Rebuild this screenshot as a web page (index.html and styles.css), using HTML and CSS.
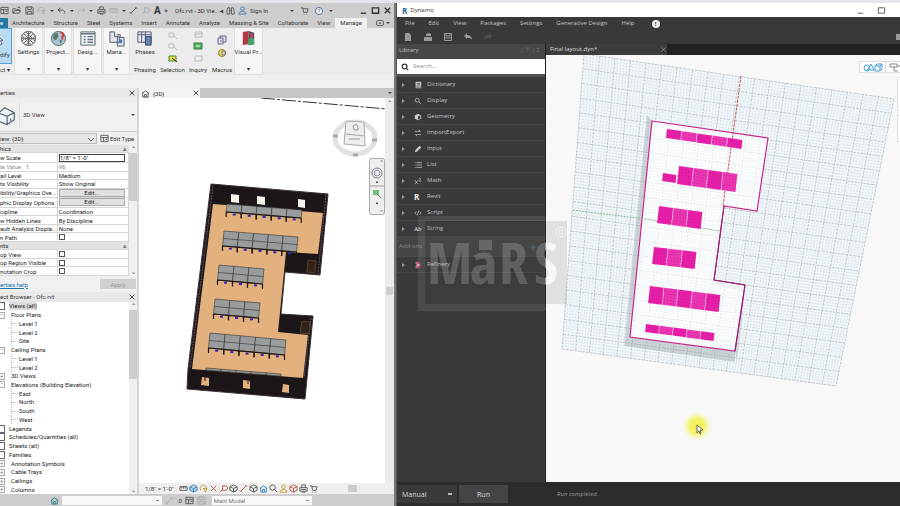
FILE: index.html
```html
<!DOCTYPE html>
<html lang="en">
<head>
<meta charset="utf-8">
<title>Revit and Dynamo</title>
<link rel="stylesheet" href="styles.css">
</head>
<body>
<svg class="defs" aria-hidden="true">
  <symbol id="doc" viewBox="0 0 10 10"><path d="M1 1.500h8v7H1zM1 4h8M4 4v4.500M6 6h2"/></symbol>
  <symbol id="open" viewBox="0 0 10 10"><path d="M1 8V3h3l1 1h3v1M1 8l2-3h6.500L8 8zM6 2l2-1 1 2"/></symbol>
  <symbol id="save" viewBox="0 0 10 10"><path d="M1 1h7l1 1v7H1zM3 1v3h4V1M3 9V6h4v3"/></symbol>
  <symbol id="sync" viewBox="0 0 10 10"><path d="M2 7a3.500 3.500 0 1 1 6-1M5 5l4 0-2 4z"/></symbol>
  <symbol id="undo" viewBox="0 0 10 10"><path d="M4 2L1 4.500 4 7M1 4.500h5a2.500 2.500 0 0 1 2 4"/></symbol>
  <symbol id="redo" viewBox="0 0 10 10"><path d="M6 2l3 2.500L6 7M9 4.500H4a2.500 2.500 0 0 0-2 4"/></symbol>
  <symbol id="print" viewBox="0 0 10 10"><path d="M3 4V1h4v3M1 4h8v4H1zM2 6h6M3 9h4"/></symbol>
  <symbol id="ruler" viewBox="0 0 10 10"><path d="M1 3h8v4H1zM3 3v2M5 3v2M7 3v2"/></symbol>
  <symbol id="dim" viewBox="0 0 10 10"><path d="M2 8l6-6M1 7l2 2M7 1l2 2"/></symbol>
  <symbol id="tag" viewBox="0 0 10 10"><path d="M1 9l3-3M4 2h3a2 2 0 0 1 0 5H4z"/></symbol>
  <symbol id="bino" viewBox="0 0 10 10"><path d="M1 9V5l1-3h2v7zM6 9V2h2l1 3v4zM4 5h2"/></symbol>
  <symbol id="user" viewBox="0 0 10 10"><circle cx="5" cy="3" r="2"/><path d="M1 9c0-4 8-4 8 0z"/></symbol>
  <symbol id="cart" viewBox="0 0 10 10"><path d="M1 2h2l1 5h4l1-4H3.500M4 9h1M7 9h1"/></symbol>
  <symbol id="box" viewBox="0 0 10 10"><path d="M1 3l4-2 4 2v4L5 9 1 7zM1 3l4 2 4-2M5 5v4"/></symbol>
  <symbol id="min" viewBox="0 0 10 10"><path d="M2 8h6"/></symbol>
  <symbol id="max" viewBox="0 0 10 10"><path d="M1.500 2h7v6h-7z"/></symbol>
  <symbol id="close" viewBox="0 0 10 10"><path d="M2 2l6 6M8 2L2 8"/></symbol>
  <symbol id="home" viewBox="0 0 10 10"><path d="M1 5l4-3 4 3M2 4v5h6V4M4 9V6h2v3"/></symbol>
  <symbol id="find" viewBox="0 0 10 10"><circle cx="4" cy="4" r="3"/><path d="M6 6l3 3"/></symbol>
</svg>

<main class="desktop">
<section class="revit" aria-label="Revit">
  <header class="qat">
    <div class="qat-tools ic">
      <button><svg><use href="#doc"/></svg></button><button><svg><use href="#open"/></svg></button><button><svg><use href="#save"/></svg></button><button class="dim"><svg><use href="#sync"/></svg></button><i></i><button><svg><use href="#undo"/></svg></button><i></i><button class="dim"><svg><use href="#redo"/></svg></button><i></i><button><svg><use href="#print"/></svg></button><button class="dim"><svg><use href="#ruler"/></svg></button><i></i><button><svg><use href="#dim"/></svg></button><button class="dim"><svg><use href="#tag"/></svg></button><button class="letter">A</button><button class="more">»</button>
    </div>
    <span class="qat-title">Ofc.rvt - 3D Vie...</span>
    <div class="qat-user ic"><b>◂</b><button><svg><use href="#bino"/></svg></button><button class="blue"><svg><use href="#user"/></svg></button><button class="sign">Sign In</button></div>
    <div class="qat-help ic"><i></i><button><svg><use href="#cart"/></svg></button><button class="help">?</button><i></i></div>
    <div class="win ic"><button><svg><use href="#min"/></svg></button><button><svg><use href="#max"/></svg></button><button><svg><use href="#close"/></svg></button></div>
  </header>
  <nav class="tabs">
    <a class="file" href="#">e</a><a href="#">Architecture</a><a href="#">Structure</a><a href="#">Steel</a><a href="#">Systems</a><a href="#">Insert</a><a href="#">Annotate</a><a href="#">Analyze</a><a href="#">Massing &amp; Site</a><a href="#">Collaborate</a><a href="#">View</a><a class="on" href="#">Manage</a><button class="camera" aria-label="Ribbon display">▪</button><i></i>
  </nav>
  <div class="ribbon">
    <div class="panel modify"><button><svg viewBox="0 0 12 20"><path d="M-4 3L3 9l-3 0 2 4-2 1-2-4-2 2z" fill="#fff" stroke="#557"/></svg>dify</button><span class="foot">ct ▾</span></div>
    <div class="panel card"><button><svg viewBox="0 0 18 18"><circle cx="9" cy="9" r="7.500" fill="#eee" stroke="#555"/><path d="M4 4l10 10M14 4L4 14M9 2v14M2 9h14M2 6l10 10M6 2l10 10M12 2L2 12M16 6L6 16" stroke="#666"/></svg>Settings</button><span class="foot">▾</span></div>
    <div class="panel card"><button><svg viewBox="0 0 18 18"><circle cx="9" cy="9" r="7.500" fill="#a9c5d4" stroke="#566"/><path d="M4 4l4-1 1 4-3 4-3-2zM10 10l3 1-2 4z" fill="#5e7769"/><path d="M11 3c3-1 4 3 2 4v3" fill="none" stroke="#d33b30" stroke-width="2"/></svg>Project...</button><span class="foot">▾</span></div>
    <div class="panel card"><button><svg viewBox="0 0 18 18"><path d="M2 2h15v14H2z" fill="#eef1f4" stroke="#566"/><path d="M2 4h15M5 7h2M5 10h2M5 13h2M9 7h6M9 10h6M9 13h6" stroke="#678" stroke-width="1.500"/></svg>Desig...</button><span class="foot">▾</span></div>
    <div class="panel card"><button><svg viewBox="0 0 18 18"><path d="M2 2h5v5h5v6H2zM9 5h4v3h4v9h-7V7" fill="#dfe6ef" stroke="#556"/><path d="M12 10h3v4h-3z" fill="#467fc0"/></svg>Mana...</button><span class="foot">▾</span></div>
    <div class="panel"><button><svg viewBox="0 0 18 18"><path d="M2 2h14v11H2zM2 5h14M6 2v11M10 2v11" fill="#e3e8f1" stroke="#557"/><path d="M10 7h6v9h-6z" fill="#6b83b5" stroke="#346"/></svg>Phases</button><span class="foot">Phasing</span></div>
    <div class="panel small"><svg viewBox="0 0 10 34"><g fill="none" stroke="#bbb"><path d="M1 3h5v4H1zM5 5l4 4M1 14h5v4H1zM5 16l4 4"/></g><path d="M1 26h7v5H1z" fill="#e9e04b" stroke="#44863c"/><path d="M4 28l5 4" stroke="#333"/></svg><span class="foot">Selection</span></div>
    <div class="panel small"><svg viewBox="0 0 10 34"><path d="M2 2h7v5H2zM2 4h7M2 26h7v5H2z" fill="none" stroke="#bbb"/><path d="M1 13h8v6H1z" fill="#55b45f" stroke="#377f45"/><path d="M3 16h4" stroke="#fff"/></svg><span class="foot">Inquiry</span></div>
    <div class="panel small"><svg viewBox="0 0 10 34"><path d="M1 8h5v6H1zM3 8V6h6v6H6M3 11h2" fill="#dde" stroke="#668"/><circle cx="5" cy="23" r="3.500" fill="#efe15b" stroke="#997f22"/><path d="M5 21h3v4H5z" fill="#ddd" stroke="#777"/></svg><span class="foot">Macros</span></div>
    <div class="panel card"><button><svg viewBox="0 0 18 18"><path d="M3 2l6-1v14l-6 1z" fill="#b83743"/><path d="M9 1l6 2v12l-6 1z" fill="#38536b"/><path d="M4 9l4 5 4-9 3 5v5l-6 1z" fill="#43a565"/><path d="M10 3l4 1v5l-3-1z" fill="#c63b4b"/></svg>Visual Pr...</button><span class="foot">▾</span></div>
  </div>
  <div class="work">
    <aside class="side">
      <h2 class="bar">erties <button aria-label="Close properties" class="ic"><svg><use href="#close"/></svg></button></h2>
      <div class="type"><svg viewBox="0 0 14 20"><path d="M-3 9l6-5 8 4v6l-6 4-8-3zM11 8l-6 3v7M5 11L-3 8M8 13v2" fill="#eef2f5" stroke="#567"/></svg><span>3D View</span><i></i></div>
      <div class="filter"><select aria-label="Element filter"><option>iew: {3D}</option></select><button class="edit-type ic"><svg><use href="#doc"/></svg>Edit Type</button></div>
      <div class="scrolled">
        <table class="props">
          <tr class="group"><th colspan="2">hics <b>⩓</b></th></tr>
          <tr><th>w Scale</th><td><input aria-label="View scale" value='1/8" = 1&apos;-0"'></td></tr>
          <tr class="off"><th>le Value &nbsp; 1:</th><td>96</td></tr>
          <tr><th>ail Level</th><td>Medium</td></tr>
          <tr><th>ts Visibility</th><td>Show Original</td></tr>
          <tr><th>ibility/Graphics Ove...</th><td><button>Edit...</button></td></tr>
          <tr><th>phic Display Options</th><td><button>Edit...</button></td></tr>
          <tr><th>cipline</th><td>Coordination</td></tr>
          <tr><th>w Hidden Lines</th><td>By Discipline</td></tr>
          <tr><th>ault Analysis Displa...</th><td>None</td></tr>
          <tr><th><label for="c1">n Path</label></th><td><input type="checkbox" id="c1"></td></tr>
          <tr class="group"><th colspan="2">nts <b>⩓</b></th></tr>
          <tr><th><label for="c2">op View</label></th><td><input type="checkbox" id="c2"></td></tr>
          <tr><th><label for="c3">op Region Visible</label></th><td><input type="checkbox" id="c3"></td></tr>
          <tr><th><label for="c4">notation Crop</label></th><td><input type="checkbox" id="c4"></td></tr>
        </table>
        <div class="scroll"><span>⌃</span><b class="thumb-a"></b><span>⌄</span></div>
      </div>
      <div class="apply"><a href="#">erties help</a><button disabled>Apply</button></div>
      <h2 class="bar">ect Browser - Ofc.rvt <button aria-label="Close browser" class="ic"><svg><use href="#close"/></svg></button></h2>
      <div class="scrolled browser">
        <ul class="tree">
          <li class="l0"><em>Views (all)</em></li>
          <li class="l1 node">Floor Plans</li><li class="l2">Level 1</li><li class="l2">Level 2</li><li class="l2">Site</li>
          <li class="l1 node">Ceiling Plans</li><li class="l2">Level 1</li><li class="l2">Level 2</li>
          <li class="l1 node plus">3D Views</li><li class="l1 node">Elevations (Building Elevation)</li>
          <li class="l2">East</li><li class="l2">North</li><li class="l2">South</li><li class="l2">West</li>
          <li class="l0 leaf">Legends</li><li class="l0 leaf">Schedules/Quantities (all)</li><li class="l0 leaf">Sheets (all)</li><li class="l0 leaf">Families</li>
          <li class="l1 node plus">Annotation Symbols</li><li class="l1 node plus">Cable Trays</li><li class="l1 node plus">Ceilings</li><li class="l1 node plus">Columns</li>
        </ul>
        <div class="scroll"><span>⌃</span><b class="thumb-b"></b><span>⌄</span></div>
      </div>
    </aside>
    <section class="view">
      <div class="view-tabs"><div class="view-tab ic"><svg><use href="#home"/></svg>{3D}<button aria-label="Close view"><svg><use href="#close"/></svg></button></div><i></i></div>
      <div class="view-body">
        <svg class="model" id="model" viewBox="140 98 246 385" preserveAspectRatio="xMinYMin slice">
          <path d="M262 98L388 109" stroke="#333" stroke-dasharray="14 2 3 2" fill="none"/>
          <path d="M212 184L329 194 321 275 286 272 282 314 314 316 306 399 188 389 189 369z" fill="#1c1619" stroke="#3c3036"/>
          <path d="M214 204L324 213 319 254 287 252 279 332 309 335 304 378 193 369z" fill="#e2b17e"/>
          <path d="M214 186L191 368M327 195l-8 79M312 318l-7 60" stroke="#69545a" stroke-dasharray="2 1"/>
          <path d="M232 194l8 1v8l-8-1zM258 196l8 1v8l-8-1zM299 199l7 1v8l-7-1z" fill="#f5f5ee"/>
          <path d="M203 377l7 1v8l-8-1zM244 380l7 1v8l-7-1zM284 384l6 1v8l-7-1z" fill="#e2b17e"/>
          <path d="M309 260l8 1-1 12-8-1zM303 321l8 1-1 12-9-1z" fill="#33241a" stroke="#5a402b"/>
          <path d="M206 377v4M249 381v3" stroke="#111"/>
        </svg>
        <svg class="cube" viewBox="0 0 48 42"><ellipse cx="24" cy="22" rx="20" ry="16" fill="none" stroke="#e2e2e2" stroke-width="5"/><path d="M15 5l18 1 1 24-21-2z" fill="#eee" stroke="#aaa"/><path d="M14 18l20 2" stroke="#aaa"/><path d="M22 10l3-2 2 3v3h-4zM18 23h11" stroke="#999" fill="none"/><path d="M2 20h5M41 24h5M22 39h5" stroke="#aaa" stroke-width="3"/></svg>
        <svg class="navbar" viewBox="0 0 16 57"><rect x=".5" y=".5" width="15" height="56" rx="2" fill="#eee" stroke="#aaa"/><circle cx="8" cy="15" r="5" fill="#fff" stroke="#778"/><circle cx="8" cy="15" r="3" fill="#e9eef5" stroke="#889"/><path d="M1 28h14M11 3h3M11 53h3" stroke="#999"/><path d="M4 32h6v5H4z" fill="#74bd78"/><path d="M8 36l4 4" stroke="#558a58"/><path d="M7 24h2l-1 1zM7 45h2l-1 1z" stroke="#555"/></svg>
        <div class="vscroll"><span>⌃</span><b></b></div>
      </div>
      <div class="view-ctl"><span>1/8" = 1'-0"</span>
        <div class="ctl-icons ic">
          <button><svg><use href="#ruler"/></svg></button><button class="blue fill"><svg><use href="#box"/></svg></button><button class="gold"><svg><use href="#sync"/></svg></button><button class="red"><svg><use href="#close"/></svg></button><button class="red"><svg><use href="#tag"/></svg></button><button><svg><use href="#box"/></svg></button><button class="red"><svg><use href="#dim"/></svg></button><button><svg><use href="#box"/></svg></button><button class="blue"><svg><use href="#home"/></svg></button><button><svg><use href="#find"/></svg></button><button class="gold"><svg><use href="#user"/></svg></button><button class="red"><svg><use href="#box"/></svg></button><button><svg><use href="#print"/></svg></button><button><svg><use href="#cart"/></svg></button>
        </div><b class="hthumb"></b></div>
    </section>
  </div>
  <footer class="status ic">
    <button class="teal"><svg><use href="#home"/></svg></button><select class="ws" aria-label="Workset"><option></option></select><button class="dim"><svg><use href="#dim"/></svg></button><span>:0</span><button><svg><use href="#doc"/></svg></button><button class="dim"><svg><use href="#save"/></svg></button><select class="opt" aria-label="Design option"><option>Main Model</option></select>
  </footer>
</section>

<section class="dynamo" aria-label="Dynamo">
  <header class="d-title"><b>R</b><span>Dynamo</span><div class="win ic"><button><svg><use href="#min"/></svg></button><button><svg><use href="#max"/></svg></button></div></header>
  <nav class="d-menu"><a href="#">File</a><a href="#">Edit</a><a href="#">View</a><a href="#">Packages</a><a href="#">Settings</a><a href="#">Generative Design</a><a href="#">Help</a><b>!</b></nav>
  <div class="d-tools">
    <button><svg viewBox="0 0 10 10"><path d="M2 1h4l2 2v6H2z" fill="#999"/></svg></button><button><svg viewBox="0 0 10 10"><path d="M1 5h8v4H1zM3 2l3-1 2 1v2H3z" fill="#999"/></svg></button><button><svg viewBox="0 0 10 10"><path d="M1.500 1.500h7v7h-7zM3 2v2h4V2M2 6h6" fill="none" stroke="#999"/></svg></button><button><svg viewBox="0 0 10 10"><path d="M1 4l3-3v2c3 0 5 2 5 5-1-2-3-2-5-2v1z" fill="#999"/></svg></button><button><svg viewBox="0 0 10 10"><path d="M9 4L6 1v2C3 3 1 5 1 8c1-2 3-2 5-2v1z" fill="#505050"/></svg></button><span class="shot"></span>
  </div>
  <div class="d-main">
    <aside class="lib">
      <h2>Library <span>| ⊤ | ≡</span></h2>
      <label class="search"><svg viewBox="0 0 10 10"><circle cx="4.500" cy="4.500" r="3" fill="none" stroke="#333" stroke-width="1.500"/><path d="M7 7l2 2" stroke="#333" stroke-width="1.500"/></svg><input type="search" placeholder="Search..." aria-label="Search"></label>
      <ul>
        <li><button><i></i><svg viewBox="0 0 10 10"><path d="M2 1h7v8H2z" fill="#ccc"/><path d="M3.500 3h4M3.500 5h4M2 7.500h7" stroke="#444"/></svg>Dictionary</button></li>
        <li><button><i></i><svg viewBox="0 0 10 10" class="ln"><circle cx="4" cy="4" r="2.500"/><path d="M6 6l3 3"/></svg>Display</button></li>
        <li><button><i></i><svg viewBox="0 0 10 10"><path d="M1 3l4-2 4 2v4L5 9 1 7z" fill="#ccc"/><path d="M5 4l3-1v4L5 8z" fill="#444"/></svg>Geometry</button></li>
        <li><button><i></i><svg viewBox="0 0 10 10" class="ln"><path d="M1 3h7M6 1l2 2M9 7H2M4 9L2 7"/></svg>ImportExport</button></li>
        <li><button><i></i><svg viewBox="0 0 10 10"><path d="M1 9l1-3 5-5 2 2-5 5z" fill="#ccc"/></svg>Input</button></li>
        <li><button><i></i><svg viewBox="0 0 10 10" class="ln"><path d="M1 2h1M3 2h7M1 5h1M3 5h7M1 8h1M3 8h7"/></svg>List</button></li>
        <li><button><i></i><svg viewBox="0 0 10 10" class="ln"><path d="M1 4l4 5M5 4L1 9M6 2c1-1 3 0 2 1L6 5h3"/></svg>Math</button></li>
        <li><button><i></i><b>R</b>Revit</button></li>
        <li><button><i></i><svg viewBox="0 0 10 10" class="ln"><path d="M3 3L1 5l2 2M7 3l2 2-2 2M6 2L4 8"/></svg>Script</button></li>
        <li><button><i></i><b class="ab">Ab</b>String</button></li>
        <li class="addons">Add-ons <button aria-label="Add"><svg viewBox="0 0 10 10"><path d="M5 1v8M1 5h8" stroke="#5b7c8d"/></svg></button></li>
        <li><button><i></i><svg viewBox="0 0 10 10"><path d="M2 1h3v3H2zM2 6h3v3H2z" fill="#c66a83"/><path d="M5 1l3 1v6L5 9z" fill="#a9405c"/><path d="M3 4h4v2H3z" fill="#e5b2bd"/></svg>Refinery</button></li>
      </ul>
    </aside>
    <section class="space">
      <div class="d-tabs"><div>Final layout.dyn*<button class="ic" aria-label="Close tab"><svg><use href="#close"/></svg></button></div></div>
      <div class="plane">
        <svg id="plane" viewBox="546 55 354 427" preserveAspectRatio="xMinYMin slice">
          <defs><radialGradient id="glow"><stop offset="0" stop-color="#f1f04a"/><stop offset=".5" stop-color="#f4f46a"/><stop offset="1" stop-color="#f8f8c0" stop-opacity="0"/></radialGradient></defs>
          <g id="grid"></g>
          <path d="M647 115L652 121 630 337 735 351 735 362 624 346z" fill="#8a9298" opacity=".35"/>
          <path d="M714 280L745 285 744 291 714 285zM735 351l8-54 1 4-7 60z" fill="#8a9298" opacity=".3"/>
          <path d="M652 121L768 138 757 211 724 206 714 280 745 285 735 351 630 337z" fill="#fff" fill-opacity=".65" stroke="#c9268b" stroke-width="1.200"/>
          <path d="M724 206L714 280 745 285 735 351" fill="none" stroke="#8b2569"/>
          <path d="M741 76L723 206" stroke="#c65b62" stroke-dasharray="3 1"/>
          <path d="M573 210L645 219 720 231" fill="none" stroke="#8cbf96" stroke-dasharray="2 1"/>
          <g id="pink"></g>
          <circle cx="697" cy="426" r="15" fill="url(#glow)"/>
          <path d="M697 425v8l2-2 1 3 1-1-1-3h3z" fill="#fff" stroke="#444" stroke-width=".8"/>
        </svg>
        <div class="modes"><button aria-label="Geometry view"><svg viewBox="0 0 20 9"><circle cx="4" cy="5" r="3"/><path d="M4 7l4-6 3 6zM12 3h5v5h-5zM12 3l2-2h5v5l-2 2M17 3l2-2"/></svg></button><button aria-label="Graph view" class="gray"><svg viewBox="0 0 20 9"><path d="M1 1h7v3H1zM8 3h4v4h4M5 4v4h4M12 2h7v3h-7z"/></svg></button></div>
        <div class="zoom-tools"><span></span><span></span></div>
      </div>
    </section>
  </div>
  <footer class="d-run"><select aria-label="Run mode"><option>Manual</option></select><button>Run</button><em>Run completed.</em></footer>
</section>
</main>
<svg class="mark" viewBox="418 215 152 97" aria-label="MaRS">
  <defs><linearGradient id="ink" gradientUnits="userSpaceOnUse" x1="545" x2="546" y1="0" y2="0"><stop offset="0" stop-color="#fff" stop-opacity=".18"/><stop offset="1" stop-color="#fff" stop-opacity=".75"/></linearGradient></defs>
  <path fill-rule="evenodd" d="M418 216h149v95H418zM425 221h142v83H425z" fill="#fff" opacity=".09"/>
  <path d="M425 221h142v83H425z" fill="#505050" opacity=".14"/>
  <text x="427 470 499 534" y="284">MaRS</text>
  <path d="M479 240h13v10h-13z" fill="#fff" opacity=".18"/>
  <circle cx="561" cy="232" r="5" fill="none" stroke="#fff" stroke-opacity=".6"/><circle cx="561" cy="232" r="2" fill="none" stroke="#fff" stroke-opacity=".6"/>
</svg>
<script src="scene.js"></script>
</body>
</html>
```
FILE: styles.css
```css
* { box-sizing: border-box; }
body { margin: 0; font: 6px/9px Roboto, "Noto Sans", sans-serif; color: #333; background: #e4e6ea; overflow: hidden; }
button, input, select { font: inherit; color: inherit; margin: 0; padding: 0; border: 0; background: none; border-radius: 0; }
select { appearance: none; }
a { color: inherit; text-decoration: none; }
ul { list-style: none; margin: 0; padding: 0; }
h2 { margin: 0; font: inherit; }
i { font-style: normal; }
.defs { position: absolute; width: 0; height: 0; }
.desktop { display: flex; height: 100vh; padding-top: 3px; }

.ic svg { width: 9px; height: 9px; display: block; fill: none; stroke: #555; }
.ic .dim svg { stroke: #aaa; }
.ic .blue svg { stroke: #3a7fb5; }
.ic .fill svg { fill: #a5d2ec; }
.ic .red svg { stroke: #b5523e; }
.ic .gold svg { stroke: #c49a2c; }
.ic .teal svg { stroke: #2c7d8a; }
.qat i, .tabs i, .type i, .view-tabs i { border: 2px solid transparent; border-top-color: #444; border-bottom: 0; width: 4px; height: 2px; }

/* Revit window */
.revit { flex: 0 0 44%; min-width: 0; display: flex; flex-direction: column; background: #f0f0f0; border-right: 2px solid #777; }
.qat { display: flex; align-items: center; height: 15px; background: #cdcdcd; }
.qat-tools { display: flex; justify-content: space-between; align-items: center; flex: 0 0 168px; }
.letter { font-size: 10px; font-weight: bold; }
.more { font-size: 8px; }
.qat-title { flex: 0 0 52px; padding-left: 7px; white-space: nowrap; }
.qat-user { display: flex; align-items: center; gap: 3px; flex: 0 0 70px; }
.qat-help { display: flex; align-items: center; gap: 6px; flex: 1; }
.help { width: 8px; height: 8px; border: 1px solid #456a99; border-radius: 50%; line-height: 6px; background: #fff; }
.win { display: flex; gap: 3px; padding-right: 2px; margin-left: auto; }
.revit .win svg { stroke: #333; stroke-width: 1.5; }
.tabs { display: flex; align-items: center; height: 10px; gap: 9px; background: #cdcdcd; white-space: nowrap; }
.tabs a { line-height: 10px; }
.tabs .file { width: 8px; margin-right: -5px; background: #2277a5; color: #fff; }
.tabs .on { background: #f0f0f0; padding: 0 5px; margin: 0 -4px; }
.camera { border: 1px solid #666; border-radius: 2px; width: 8px; height: 6px; line-height: 4px; margin-left: 4px; }
.tabs i { margin-left: -7px; }
.ribbon { display: grid; grid-template-columns: 14px 30px 29px 30px 28px 28px 27px 24px 24px 30px; height: 47px; background: #ececec; }
.panel { display: flex; flex-direction: column; align-items: center; justify-content: space-between; padding: 2px 0 1px; white-space: nowrap; min-width: 0; }
.panel button svg { display: block; width: 17px; height: 17px; margin: 0 auto; fill: none; }
.card { background: #f5f5f5; border: 1px solid #e0e0e0; border-top: 0; margin-right: 1px; }
.modify { align-items: flex-start; padding: 0 0 1px; }
.modify button { width: 12px; height: 36px; background: #b9dcf4; border: 1px solid #5aa2d0; border-left: 0; text-align: left; }
.panel.modify button svg { width: 11px; margin: 0; }
.small svg { width: 10px; height: 34px; }
.work { display: flex; flex: 1; min-height: 0; padding-top: 13px; }

.side { flex: 0 0 139px; display: flex; flex-direction: column; border-right: 2px solid #d5d5d5; }
.bar { display: flex; justify-content: space-between; align-items: center; height: 10px; line-height: 10px; padding-right: 1px; background: #e9e9e9; }
.bar svg { stroke: #222; width: 8px; height: 8px; }
.type { display: flex; align-items: center; height: 34px; padding-right: 2px; border-bottom: 1px solid #d0d0d0; }
.type svg { width: 20px; height: 24px; border-right: 1px solid #ddd; fill: none; }
.type span { flex: 1; padding-left: 3px; }
.filter { display: flex; gap: 3px; height: 13px; align-items: center; }
.filter select { width: 97px; height: 11px; border: 1px solid #bbb; border-left: 0; background-color: #e6e6e6; background-image: linear-gradient(45deg, transparent 40%, #666 40% 60%, transparent 60%), linear-gradient(-45deg, transparent 40%, #666 40% 60%, transparent 60%); background-repeat: no-repeat; background-position: 88px 4px, 91px 4px; background-size: 3px 3px; }
.edit-type { display: flex; align-items: center; gap: 1px; white-space: nowrap; }
.scrolled { display: flex; background: #fff; }
.props { flex: 1; height: 131px; border-collapse: collapse; table-layout: fixed; line-height: 7px; color: #222; }
.props th, .props td { font-weight: normal; text-align: left; padding: 0; border-bottom: 1px solid #d5d5d5; white-space: nowrap; overflow: hidden; }
.props td { border-left: 1px solid #d5d5d5; border-right: 1px solid #d5d5d5; padding-left: 1px; }
.props th:first-child:not([colspan]) { width: 56px; }
.props tr.group th { background: #e2e2e2; }
.group b { float: right; padding-right: 3px; font-weight: normal; }
.props .off { color: #888; }
.props td button { display: block; width: 66px; height: 8px; line-height: 6px; background: #e0e0e0; border: 1px solid #aaa; }
.props td input { display: block; width: 66px; height: 8px; border: 1px solid #444; }
.props td input[type=checkbox] { appearance: none; width: 6px; height: 6px; border: 1px solid #555; background: #fff; }
.scroll { flex: 0 0 8px; display: flex; flex-direction: column; background: #f0f0f0; text-align: center; line-height: 8px; }
.scroll b { background: #cdcdcd; margin-bottom: auto; }
.thumb-a { height: 48px; }
.thumb-b { height: 69px; }
.apply { display: flex; justify-content: space-between; align-items: center; height: 16px; padding: 0 1px 0 0; }
.apply a { color: #2676ae; text-decoration: underline; }
.apply button { width: 36px; height: 10px; background: #d0d0d0; color: #999; }
.browser { flex: 1; min-height: 0; }
.tree { flex: 1; display: flex; flex-direction: column; color: #222; line-height: 8px; }
.tree li { flex: 1; display: flex; align-items: center; white-space: nowrap; }
.tree em { font-style: normal; background: #dcdcdc; }
.l0::before { content: ""; width: 4px; height: 6px; border: 1px solid #667; border-left: 0; margin-right: 4px; }
.l1::before { content: "−"; width: 4px; height: 5px; border: 1px solid #aaa; border-left: 0; line-height: 3px; margin-right: 6px; color: #777; }
.plus::before { content: "+"; }
.l2 { margin-left: 11px; border-left: 1px dotted #bbb; }
.l2::before { content: ""; width: 6px; border-top: 1px dotted #bbb; margin-right: 1px; }

.view { flex: 1; min-width: 0; display: flex; flex-direction: column; }
.view-tabs { display: flex; align-items: center; justify-content: space-between; height: 10px; background: #c6c6c6; padding-right: 2px; }
.view-tab { display: flex; align-items: center; gap: 3px; width: 61px; height: 10px; background: #f3f3f3; padding-left: 2px; }
.view-tab button { margin-left: auto; }
.view-tab button svg { width: 8px; height: 8px; stroke: #222; }
.view-body { position: relative; flex: 1; min-height: 0; display: flex; background: #fff; }
.model { flex: 1; min-width: 0; height: 100%; }
.vscroll { flex: 0 0 9px; background: #ececec; text-align: center; }
.vscroll span { display: block; }
.vscroll b { display: block; height: 8px; margin: 180px 1px 0; background: #ccc; }
.cube { position: absolute; right: 15px; top: 18px; width: 48px; height: 42px; }
.navbar { position: absolute; right: 9px; top: 60px; width: 16px; height: 57px; }
.view-ctl { display: flex; align-items: center; height: 11px; padding-left: 6px; background: #efefef; white-space: nowrap; }
.ctl-icons { display: flex; gap: 1px; margin-left: 5px; }
.hthumb { width: 9px; height: 7px; background: #ccc; margin-left: 30px; }
.status { display: flex; align-items: center; gap: 3px; height: 12px; padding-left: 50px; background: #cdcdcd; }
.status select { width: 100px; height: 9px; background: #f8f8f8; color: #777; padding: 0 2px; background-image: linear-gradient(#888, #888); background-repeat: no-repeat; background-position: 94px 4px; background-size: 3px 1px; }
.status .opt { margin-left: 3px; }

/* Dynamo window */
.dynamo { flex: 1; min-width: 0; display: flex; flex-direction: column; background: #3a3a3a; color: #c4c4c4; font-family: "Open Sans", "Noto Sans", sans-serif; border-left: 1px solid #555; }
.d-title { display: flex; align-items: center; height: 14px; background: #fff; color: #333; padding-left: 5px; gap: 3px; }
.d-title b { font-size: 8px; color: #24649b; }
.d-title .win { gap: 12px; padding-right: 14px; }
.d-menu { display: flex; align-items: center; height: 13px; gap: 14px; padding-left: 8px; background: #393939; }
.d-menu b { width: 8px; height: 8px; line-height: 8px; border-radius: 50%; background: #eee; color: #333; text-align: center; margin-left: 3px; }
.d-tools { display: flex; align-items: center; height: 14px; padding-left: 6px; gap: 10px; background: #393939; }
.d-tools button, .d-tools svg { display: block; width: 10px; height: 10px; }
.shot { width: 4px; height: 6px; background: #999; margin-left: auto; }
.d-main { flex: 1; min-height: 0; display: flex; }
.lib { flex: 0 0 149px; display: flex; flex-direction: column; border-right: 1px solid #222; }
.lib h2 { display: flex; justify-content: space-between; height: 15px; line-height: 13px; padding: 0 5px 0 2px; background: #474747; }
.lib h2 span { color: #777; }
.search { display: flex; align-items: center; height: 15px; background: #fff; padding-left: 4px; gap: 4px; }
.search svg { width: 8px; height: 8px; }
.search input { flex: 1; min-width: 0; outline: 0; }
.search input::placeholder { color: #888; opacity: 1; }
.lib ul { border-top: 3px solid #505050; }
.lib li { height: 16px; border-bottom: 1px solid #484848; }
.lib li button { display: flex; align-items: center; width: 100%; height: 15px; padding-left: 5px; text-align: left; }
.lib li i { border: 2px solid transparent; border-left: 3px solid #999; border-right: 0; margin-right: 9px; }
.lib li svg, .lib li b { width: 8px; height: 8px; margin-right: 5px; line-height: 8px; font-size: 8px; color: #eee; }
.lib li b.ab { font: 6px/8px "Liberation Serif", serif; }
.ln { fill: none; stroke: #bbb; }
.lib li.addons { display: flex; justify-content: space-between; align-items: center; height: 20px; padding-left: 2px; background: #454545; color: #888; }
.lib li.addons button { width: 16px; padding: 0; }
.space { flex: 1; min-width: 0; display: flex; flex-direction: column; }
.d-tabs { height: 11px; background: #222; }
.d-tabs div { display: flex; justify-content: space-between; align-items: center; width: 121px; height: 11px; padding-left: 4px; background: #3d3d3d; color: #ddd; }
.d-tabs svg { width: 7px; height: 7px; stroke: #999; }
.plane { position: relative; flex: 1; min-height: 0; background: #f8f8f8; }
.plane > svg { display: block; width: 100%; height: 100%; }
.modes { position: absolute; right: -13px; top: 6px; display: flex; background: #fff; border: 1px solid #ddd; }
.modes button { width: 26px; height: 10px; border-right: 1px solid #ddd; }
.modes svg { display: block; width: 20px; height: 9px; margin: 0 auto; fill: none; stroke: #3e9bd6; }
.modes .gray svg { stroke: #888; }
.zoom-tools { position: absolute; right: 0; top: 22px; display: grid; gap: 4px; }
.zoom-tools span { width: 3px; height: 34px; background: #fff; border: 1px solid #e2e2e2; border-right: 0; }
.zoom-tools span + span { height: 27px; }
.d-run { display: flex; align-items: center; height: 24px; background: #2c2c2c; font-size: 7px; color: #ddd; }
.d-run select { width: 60px; height: 18px; padding-left: 5px; background: linear-gradient(#bbb, #bbb) no-repeat 51px 8px / 4px 2px #3a3a3a; margin-right: 2px; }
.d-run button { width: 49px; height: 18px; background: #444; }
.d-run em { margin-left: 49px; font-size: 6px; color: #999; }

.mark { position: absolute; left: 418px; top: 215px; width: 152px; height: 97px; pointer-events: none; }
.mark text { font: bold 58px "Liberation Sans Narrow", "Open Sans Condensed", Roboto, sans-serif; fill: url(#ink); }
```
FILE: scene.js
```js
const make = (parent, d, attrs) => {
  const p = document.createElementNS("http://www.w3.org/2000/svg", "path");
  p.setAttribute("d", d);
  for (const k in attrs) p.setAttribute(k, attrs[k]);
  parent.appendChild(p);
};
const mix = (a, b, t) => [a[0] + (b[0] - a[0]) * t, a[1] + (b[1] - a[1]) * t];
const line = (a, b) => `M${a[0].toFixed(1)} ${a[1].toFixed(1)}L${b[0].toFixed(1)} ${b[1].toFixed(1)}`;

// Ground grid: minor lines with a heavier line every fifth
const tl = [584, 54], tr = [894, 99], br = [836, 386], bl = [562, 349];
const grid = document.getElementById("grid");
make(grid, `M${tl}L${tr} ${br} ${bl}z`, { fill: "#f4f8fa" });
let minor = "", major = "";
for (let i = 0; i <= 100; i++) {
  const t = i / 100;
  const seg = line(mix(tl, tr, t), mix(bl, br, t)) + line(mix(tl, bl, t), mix(tr, br, t));
  if (i % 5) minor += seg; else major += seg;
}
make(grid, minor, { stroke: "#bccfd8", "stroke-width": 0.5, "stroke-dasharray": "2 1", opacity: 0.75 });
make(grid, major, { stroke: "#98a6ad", "stroke-width": 0.7, "stroke-dasharray": "3 1", opacity: 0.75 });

// Rows of blocks: start, end of the top edge, height, columns
const pink = document.getElementById("pink");
[
  [[667, 129], [743, 140], 9, 5], [[679, 166], [738, 174], 18, 4], [[663, 173], [677, 175], 8, 1],
  [[659, 206], [703, 212], 17, 3], [[654, 247], [697, 252], 17, 3],
  [[650, 286], [721, 295], 17, 5], [[646, 324], [715, 333], 8, 5]
].forEach(([a, b, h, n]) => {
  for (let i = 0; i < n; i++) {
    const p = mix(a, b, i / n), q = mix(a, b, (i + 0.96) / n);
    make(pink, `M${p}L${q}l${-h / 9} ${h}L${p[0] - h / 9} ${p[1] + h}z`, { fill: i % 2 ? "#ec35b2" : "#e71fa8" });
    for (let y = 3; y < h; y += 3) {
      make(pink, line([p[0], p[1] + y], [q[0] - 1, q[1] + y]), { stroke: "#b51a88", "stroke-width": 0.6, "stroke-dasharray": "1 2" });
    }
  }
});

// Desks of the 3D model: start, end, height, columns, desk rows
const model = document.getElementById("model");
[
  [[228, 204], [303, 210], 8, 5, 1], [[225, 231], [299, 237], 15, 5, 2], [[220, 265], [265, 269], 15, 3, 2],
  [[216, 299], [261, 303], 15, 3, 2], [[211, 333], [287, 340], 15, 5, 2], [[207, 368], [282, 374], 2, 5, 1]
].forEach(([a, b, h, n, rows]) => {
  const s = h / 10;
  for (let i = 0; i < n; i++) {
    const p = mix(a, b, i / n), q = mix(a, b, (i + 1) / n);
    make(model, `M${p}L${q}l${-s} ${h}L${p[0] - s} ${p[1] + h}z`, { fill: "#999c9d", stroke: "#333", "stroke-width": 0.6 });
    if (rows > 1) make(model, line([p[0] - s / 2, p[1] + h / 2], [q[0] - s / 2, q[1] + h / 2]), { stroke: "#333", "stroke-width": 0.6 });
    if (h < 4) continue;
    const x = p[0] - s, y = p[1] + h, m = mix(p, q, 0.5);
    make(model, `${line([x, y], [q[0] - s, q[1] + h])}M${x} ${y}v5M${q[0] - s} ${q[1] + h}v5`, { stroke: "#1d1712", "stroke-width": 1.2 });
    make(model, `M${m[0] - s - 1} ${m[1] + h + 1}h3v2h-3z`, { fill: "#3422b8" });
  }
});
```
